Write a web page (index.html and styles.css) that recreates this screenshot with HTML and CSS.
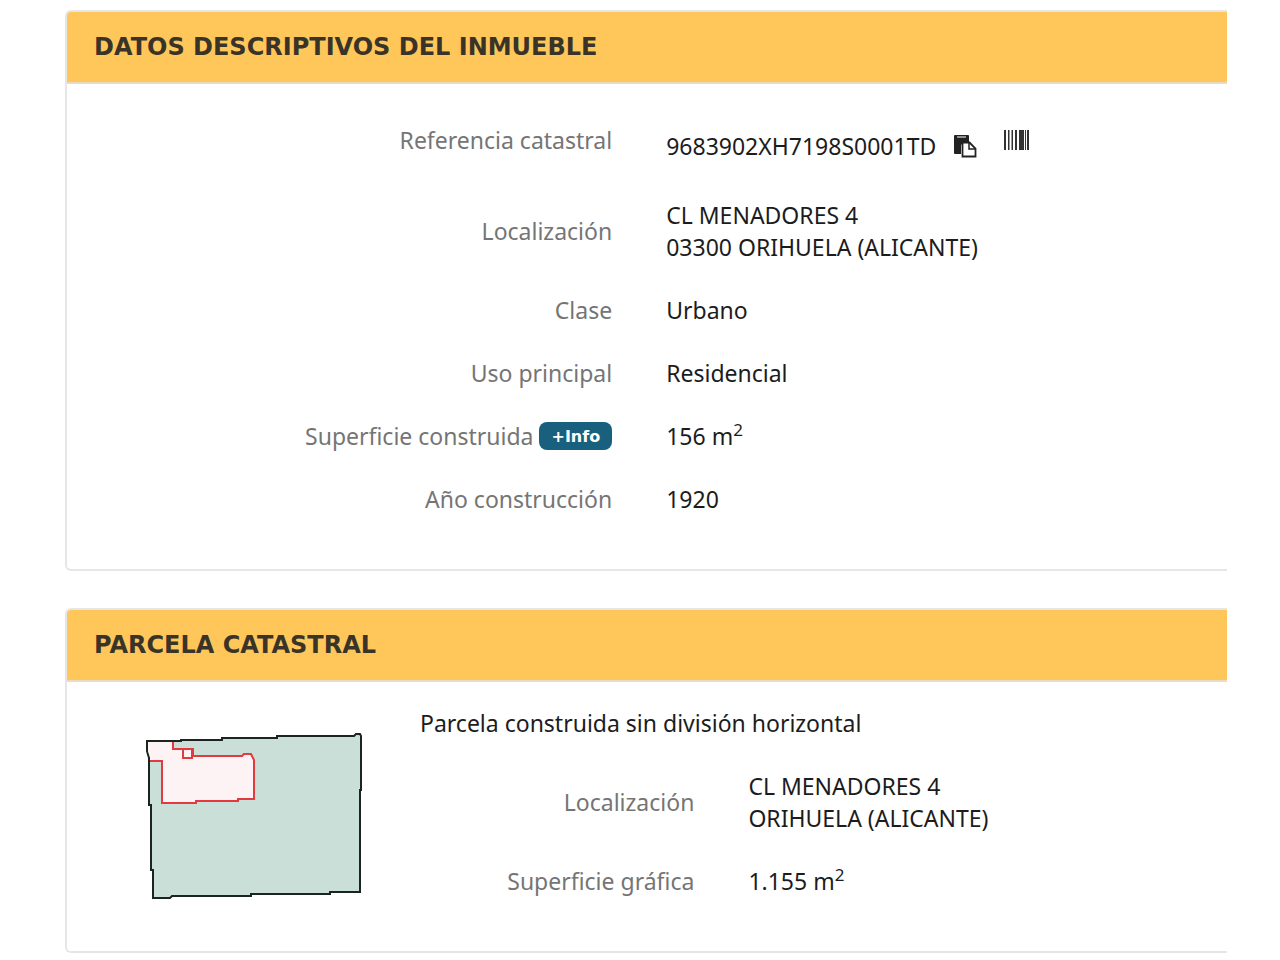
FILE: index.html
```html
<!DOCTYPE html>
<html lang="es">
<head>
  <meta charset="UTF-8">
  <meta name="viewport" content="width=device-width, initial-scale=1">
  <title>Datos descriptivos del inmueble</title>
  <link rel="stylesheet" href="styles.css">
</head>
<body>

<main>
  <section class="panel">
    <h2 class="panel-heading">DATOS DESCRIPTIVOS DEL INMUEBLE</h2>
    <dl class="datos datos-inmueble">
      <div class="fila fila-referencia">
        <dt>Referencia catastral</dt>
        <dd>
          <span class="referencia">
            <span>9683902XH7198S0001TD</span>
            <button type="button" class="icono" aria-label="Copiar referencia">
              <svg width="24" height="24" viewBox="0 0 24 24">
                <path d="M1 2q0-1 1-1h13q1 0 1 1v6h-5l-3 3v9H2q-1 0-1-1z" fill="#222"/>
                <path d="M4 3h9" stroke="#fff" stroke-width="1"/>
                <path d="M9.500 8.500h7l6 6v8h-13z" fill="#fff" stroke="#222" stroke-width="1.800"/>
                <path d="M16 9v6h6.500" fill="none" stroke="#222" stroke-width="1.500"/>
              </svg>
            </button>
          </span>
          <button type="button" class="icono" aria-label="Código de barras">
            <svg width="26" height="20" viewBox="0 0 26 20" fill="#333">
              <path d="M0 0h2v20H0zM4 0h1.500v20H4zM7.500 0h1.500v20H7.500zM11 0h2v20h-2zM15 0h5v20h-5zM21 0h1v20h-1zM23 0h2v20h-2z"/>
            </svg>
          </button>
        </dd>
      </div>
      <div class="fila">
        <dt>Localización</dt>
        <dd>CL MENADORES 4<br>03300 ORIHUELA (ALICANTE)</dd>
      </div>
      <div class="fila">
        <dt>Clase</dt>
        <dd>Urbano</dd>
      </div>
      <div class="fila">
        <dt>Uso principal</dt>
        <dd>Residencial</dd>
      </div>
      <div class="fila">
        <dt class="con-info">Superficie construida <button type="button" class="info">+Info</button></dt>
        <dd>156 m<sup>2</sup></dd>
      </div>
      <div class="fila">
        <dt>Año construcción</dt>
        <dd>1920</dd>
      </div>
    </dl>
  </section>

  <section class="panel">
    <h2 class="panel-heading">PARCELA CATASTRAL</h2>
    <div class="parcela">
      <svg class="croquis" width="250" height="200" viewBox="0 0 250 200" role="img" aria-label="Croquis de la parcela">
        <path d="M17 26H51V25H92V23H147V21H224L226 19H230L231 21V75H230V177H200V179H121V181H42L40 183H23V155H21V90H19V43L17 36z" fill="#c9dfd7" stroke="#1c2422" stroke-width="2"/>
        <path d="M18 27H43V34H53V43H63V41H112L114 39H121L124 45V84H108V86H66V88H32V46H20V42L18 36z" fill="#fdf3f4"/>
        <path d="M53 34H62V43H53z" fill="#fdf3f4"/>
        <path d="M43 27V34H63V41H112L114 39H121L124 45V84H108V86H66V88H32V46H20M53 34V43H62V34" fill="none" stroke="#e23a3f" stroke-width="2"/>
      </svg>
      <div class="detalle">
        <p>Parcela construida sin división horizontal</p>
        <dl class="datos">
          <div class="fila">
            <dt>Localización</dt>
            <dd>CL MENADORES 4<br>ORIHUELA (ALICANTE)</dd>
          </div>
          <div class="fila">
            <dt>Superficie gráfica</dt>
            <dd>1.155 m<sup>2</sup></dd>
          </div>
        </dl>
      </div>
    </div>
  </section>
</main>

</body>
</html>
```

FILE: styles.css
```css
* {
  box-sizing: border-box;
}

body {
  margin: 0;
  background-color: #fff;
  color: #1c1c1c;
  font-family: "Noto Sans", sans-serif;
  font-size: 23px;
  line-height: 32px;
}

main {
  display: flex;
  flex-direction: column;
  gap: 37px;
  padding: 10px 53px 0 65px;
}

.panel {
  border: 2px solid #e6e6e6;
  border-right: none;
  border-radius: 6px 0 0 6px;
  overflow: hidden;
}

.panel-heading {
  margin: 0;
  padding: 19px 27px;
  background-color: #ffc75a;
  border-bottom: 2px solid #e8dcc0;
  color: #3a3428;
  font-family: "DejaVu Sans", sans-serif;
  font-size: 24px;
  font-weight: bold;
}

.datos {
  display: flex;
  flex-direction: column;
  gap: 31px;
  margin: 0;
}

.datos-inmueble {
  padding: 40px 0 54px;
}

.fila {
  display: grid;
  grid-template-columns: 47% 1fr;
  column-gap: 54px;
  align-items: center;
}

dt {
  color: #757575;
  text-align: right;
}

dd {
  margin: 0;
}

sup {
  font-size: 17px;
  line-height: 0;
}

.fila-referencia {
  align-items: start;
  min-height: 44px;
}

.fila-referencia dd {
  display: flex;
  align-items: flex-start;
  gap: 27px;
}

.referencia {
  display: flex;
  align-items: center;
  gap: 17px;
  padding-top: 6px;
}

.icono {
  display: flex;
  align-items: center;
  height: 32px;
  padding: 0;
  border: none;
  background: none;
  cursor: pointer;
}

.con-info {
  display: flex;
  justify-content: flex-end;
  align-items: center;
  gap: 6px;
}

.info {
  height: 28px;
  padding: 0 12px;
  border: none;
  border-radius: 8px;
  background-color: #19607f;
  color: #fff;
  font-family: "DejaVu Sans", sans-serif;
  font-size: 16px;
  font-weight: bold;
  cursor: pointer;
}

.parcela {
  display: flex;
  padding: 25px 0 54px;
}

.croquis {
  flex: none;
  margin: 8px 40px -20px 63px;
}

.detalle {
  flex: 1;
}

.detalle p {
  margin: 0 0 31px;
}

.detalle .fila {
  grid-template-columns: 34% 1fr;
}
```
